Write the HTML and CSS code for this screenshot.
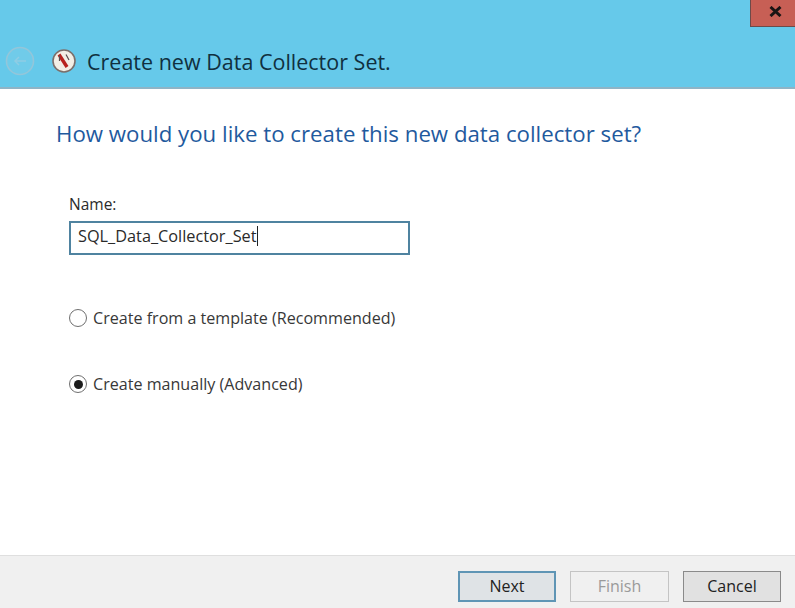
FILE: index.html
```html
<!DOCTYPE html>
<html lang="en">
<head>
<meta charset="utf-8">
<title>Create new Data Collector Set.</title>
<link rel="stylesheet" href="styles.css">
</head>
<body>
<div class="window">
  <header class="header">
    <div class="caption">
      <div class="close"><svg width="13" height="11" viewBox="0 0 13 11"><path d="M1.5 1L11.5 10M11.5 1L1.5 10" stroke="#1a1414" stroke-width="3" fill="none"/></svg></div>
    </div>
    <div class="titlebar">
      <svg class="back" width="30" height="30" viewBox="0 0 30 30"><circle cx="15" cy="15" r="13.5" fill="#70cbe9" stroke="#93c6da" stroke-width="1.6"/><path d="M21 15H10M14 11l-4 4 4 4" fill="none" stroke="#8fcde4" stroke-width="1.5"/></svg>
      <svg class="appicon" width="24" height="24" viewBox="0 0 24 24"><circle cx="12" cy="12" r="11" fill="#f3efe6" stroke="#7b6f6b" stroke-width="1.6"/><path d="M7 5.5L15 18" stroke="#b8231f" stroke-width="3.4"/><path d="M7.5 12V6.5M14 5.5L17 11" stroke="#5b4d50" stroke-width="1.2" fill="none"/></svg>
      <h1 class="title">Create new Data Collector Set.</h1>
    </div>
  </header>
  <main class="content">
    <h2 class="question">How would you like to create this new data collector set?</h2>
    <label class="name-label" for="name">Name:</label>
    <div class="input" id="name"><span>SQL_Data_Collector_Set</span><i class="caret"></i></div>
    <div class="options">
      <div class="option"><span class="radio"></span><span>Create from a template (Recommended)</span></div>
      <div class="option"><span class="radio checked"></span><span>Create manually (Advanced)</span></div>
    </div>
  </main>
  <footer class="footer">
    <div class="btn primary">Next</div>
    <div class="btn disabled">Finish</div>
    <div class="btn">Cancel</div>
  </footer>
</div>
</body>
</html>
```
FILE: styles.css
```css
* { box-sizing: border-box; }
html, body { margin: 0; height: 100%; }
body { font-family: "Open Sans", "Noto Sans", sans-serif; background: #fff; overflow: hidden; }
.window { width: 795px; height: 608px; display: flex; flex-direction: column; }
.header { height: 89px; background: #66c9ea; border-bottom: 2px solid #8fb4c6; display: flex; flex-direction: column; justify-content: space-between; }
.caption { display: flex; justify-content: flex-end; }
.close { width: 46px; height: 27px; margin-right: -1px; background: #c75f55; border: 1px solid #6e4a48; border-top: 0; display: flex; align-items: center; justify-content: center; padding: 0 0 3px 5px; }
.titlebar { display: flex; align-items: center; height: 36px; margin-bottom: 8px; padding-left: 5px; }
.back { margin-right: 17px; flex: none; }
.appicon { margin-right: 11px; flex: none; }
.title { margin: 0; font-size: 21.5px; font-weight: 400; color: #10303f; white-space: nowrap; }
.content { flex: 1; padding: 29px 0 0 56px; display: flex; flex-direction: column; align-items: flex-start; }
.question { margin: 0; font-size: 22.25px; line-height: 32px; font-weight: 400; color: #1f5a9e; white-space: nowrap; }
.name-label { margin: 44px 0 0 13px; font-size: 15.5px; line-height: 20px; color: #2b2b2b; }
.input { margin: 7px 0 0 13px; width: 341px; height: 34px; border: 2px solid #4f83a0; display: flex; align-items: center; padding: 0 0 4px 7px; font-size: 16.3px; color: #2a2a2a; }
.caret { width: 1px; height: 20px; background: #222; }
.options { margin: 53px 0 0 13px; display: flex; flex-direction: column; gap: 46px; }
.option { display: flex; align-items: center; height: 20px; gap: 6px; font-size: 16.1px; color: #383838; white-space: nowrap; }
.radio { width: 18px; height: 18px; border-radius: 50%; border: 1.5px solid #6f6f6f; background: #fff; flex: none; display: flex; align-items: center; justify-content: center; }
.radio.checked::after { content: ""; width: 9px; height: 9px; border-radius: 50%; background: #1c1c1c; }
.footer { height: 53px; background: #f0f0f0; border-top: 1px solid #dfdfdf; display: flex; justify-content: flex-end; gap: 14px; padding: 15px 14px 0 0; }
.btn { width: 98px; height: 31px; border: 1.5px solid #8a8a8a; background: #e1e1e1; display: flex; align-items: center; justify-content: center; padding-bottom: 2px; font-size: 16px; color: #222; }
.btn.primary { border: 2px solid #5f95b5; background: #dfe3e6; }
.btn.disabled { width: 99px; border-color: #c4c4c4; background: #f0f0f0; color: #9a9a9a; }
```
